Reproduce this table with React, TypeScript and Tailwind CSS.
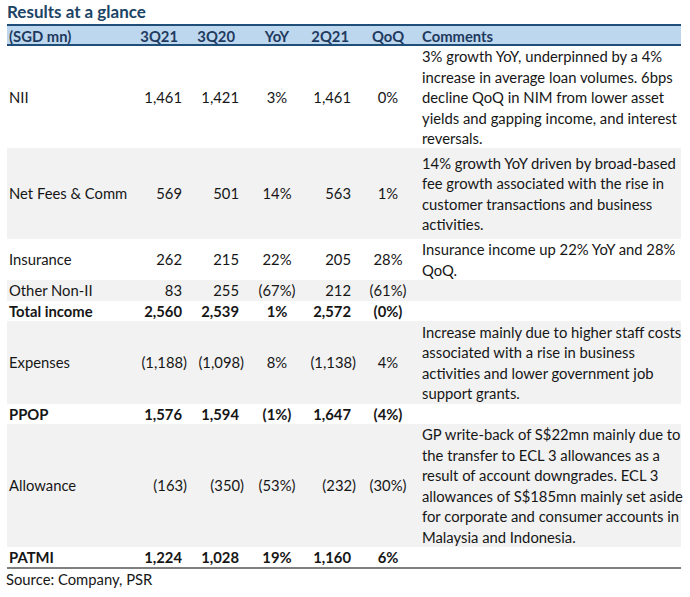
import React from 'react'

type Row = {
  label: string
  q321: string
  q320: string
  yoy: string
  q221: string
  qoq: string
  comment?: string[]
  bold?: boolean
  shaded?: boolean
  height: string
}

const rows: Row[] = [
  {
    label: 'NII',
    q321: '1,461',
    q320: '1,421',
    yoy: '3%',
    q221: '1,461',
    qoq: '0%',
    comment: [
      '3% growth YoY, underpinned by a 4%',
      'increase in average loan volumes. 6bps',
      'decline QoQ in NIM from lower asset',
      'yields and gapping income, and interest',
      'reversals.',
    ],
    height: 'h-[102px]',
  },
  {
    label: 'Net Fees & Comm',
    q321: '569',
    q320: '501',
    yoy: '14%',
    q221: '563',
    qoq: '1%',
    comment: [
      '14% growth YoY driven by broad-based',
      'fee growth associated with the rise in',
      'customer transactions and business',
      'activities.',
    ],
    shaded: true,
    height: 'h-[91px]',
  },
  {
    label: 'Insurance',
    q321: '262',
    q320: '215',
    yoy: '22%',
    q221: '205',
    qoq: '28%',
    comment: ['Insurance income up 22% YoY and 28%', 'QoQ.'],
    height: 'h-[41px]',
  },
  {
    label: 'Other Non-II',
    q321: '83',
    q320: '255',
    yoy: '(67%)',
    q221: '212',
    qoq: '(61%)',
    shaded: true,
    height: 'h-[21px]',
  },
  {
    label: 'Total income',
    q321: '2,560',
    q320: '2,539',
    yoy: '1%',
    q221: '2,572',
    qoq: '(0%)',
    bold: true,
    height: 'h-[20px]',
  },
  {
    label: 'Expenses',
    q321: '(1,188)',
    q320: '(1,098)',
    yoy: '8%',
    q221: '(1,138)',
    qoq: '4%',
    comment: [
      'Increase mainly due to higher staff costs',
      'associated with a rise in business',
      'activities and lower government job',
      'support grants.',
    ],
    shaded: true,
    height: 'h-[83px]',
  },
  {
    label: 'PPOP',
    q321: '1,576',
    q320: '1,594',
    yoy: '(1%)',
    q221: '1,647',
    qoq: '(4%)',
    bold: true,
    height: 'h-[20px]',
  },
  {
    label: 'Allowance',
    q321: '(163)',
    q320: '(350)',
    yoy: '(53%)',
    q221: '(232)',
    qoq: '(30%)',
    comment: [
      'GP write-back of S$22mn mainly due to',
      'the transfer to ECL 3 allowances as a',
      'result of account downgrades. ECL 3',
      'allowances of S$185mn mainly set aside',
      'for corporate and consumer accounts in',
      'Malaysia and Indonesia.',
    ],
    shaded: true,
    height: 'h-[123px]',
  },
  {
    label: 'PATMI',
    q321: '1,224',
    q320: '1,028',
    yoy: '19%',
    q221: '1,160',
    qoq: '6%',
    bold: true,
    height: 'h-[20px]',
  },
]

// accounting format: positives leave room for the closing paren
function Num({ v }: { v: string }) {
  const neg = v.startsWith('(')
  return <span className={neg ? '' : 'pr-[5px]'}>{v}</span>
}

const grid = 'grid grid-cols-[123px_57px_57px_66px_46px_64px_1fr] items-center'

export default function App() {
  return (
    <div className="w-[690px] h-[597px] bg-white text-[#161616] font-['Lato','Noto_Sans',sans-serif] text-[14.8px] leading-[20.5px]">
      <div className="pl-[7px] pt-[1px] h-[24px] text-[17px] leading-[22px] font-bold text-[#1b4466]">
        Results at a glance
      </div>

      <div className="ml-[7px] w-[674px]">
        {/* Header */}
        <div className={`${grid} h-[22px] bg-[#bdd7ee] border-t-2 border-b-2 border-[#1f4e79] font-bold text-[#1f3a5f]`}>
          <div className="pl-[2px]">(SGD mn)</div>
          <div className="text-right pr-[9px]">3Q21</div>
          <div className="text-right pr-[9px]">3Q20</div>
          <div className="text-center">YoY</div>
          <div className="text-right pr-[7px]">2Q21</div>
          <div className="text-center">QoQ</div>
          <div className="pl-[2px]">Comments</div>
        </div>

        {rows.map((r) => (
          <div
            key={r.label}
            className={`${grid} ${r.height} ${r.shaded ? 'bg-[#f2f2f2]' : 'bg-white'} ${r.bold ? 'font-bold' : ''}`}
          >
            <div className="pl-[2px] whitespace-nowrap">{r.label}</div>
            <div className="text-right whitespace-nowrap"><Num v={r.q321} /></div>
            <div className="text-right whitespace-nowrap"><Num v={r.q320} /></div>
            <div className="text-center whitespace-nowrap">{r.yoy}</div>
            <div className="text-right whitespace-nowrap"><Num v={r.q221} /></div>
            <div className="text-center whitespace-nowrap">{r.qoq}</div>
            <div className="pl-[2px] font-normal">
              {r.comment?.map((line) => (
                <div key={line} className="whitespace-nowrap">{line}</div>
              ))}
            </div>
          </div>
        ))}

        <div className="h-[2px] bg-[#7f7f7f]" />
      </div>

      <div className="pl-[6px] pt-[1px] leading-[18px]">Source: Company, PSR</div>
    </div>
  )
}
